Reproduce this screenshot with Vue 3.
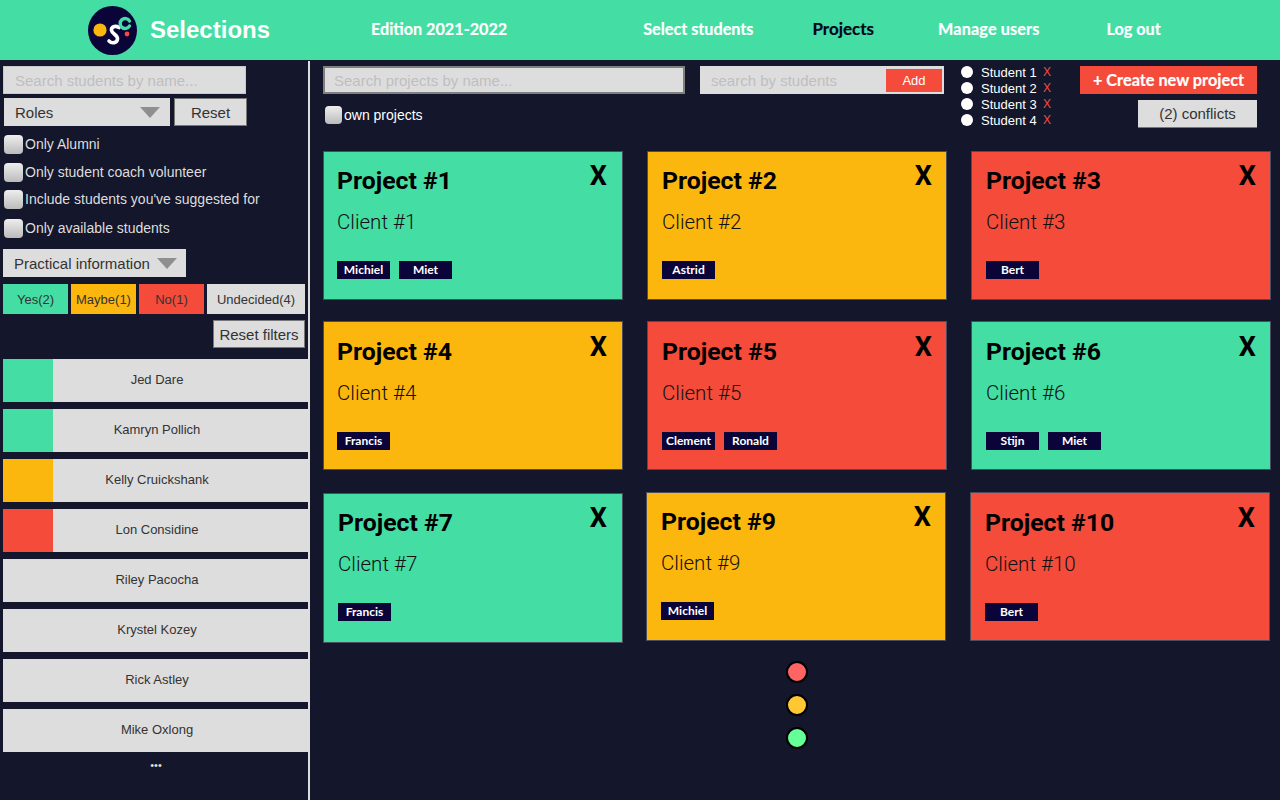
<template>
  <div class="page">
    <header class="topbar">
      <svg class="logo" viewBox="0 0 49 49" width="49" height="49">
        <circle cx="24.5" cy="24.5" r="24.5" fill="#0a0439" />
        <circle cx="12" cy="24" r="6.6" fill="#fcb70e" />
        <path d="M31 21.5C27 19 23 21 23.5 24.5 24 28 30 29 29.5 33 29 37 24 38 21 35" fill="none" stroke="#fff" stroke-width="3.6" stroke-linecap="round" />
        <path d="M41.5 15A5 5 0 1 0 41.5 20" fill="none" stroke="#44dda4" stroke-width="3.4" stroke-linecap="round" />
        <circle cx="39" cy="28" r="2.4" fill="#f44b3a" />
      </svg>
      <div class="brand">Selections</div>
      <a class="nav edition">Edition 2021-2022</a>
      <a class="nav select">Select students</a>
      <a class="nav current">Projects</a>
      <a class="nav manage">Manage users</a>
      <a class="nav logout">Log out</a>
    </header>

    <div class="body">
      <aside class="sidebar">
        <input class="field student-search" placeholder="Search students by name..." />
        <div class="role-row">
          <div class="dropdown roles">Roles<span class="caret"></span></div>
          <button class="plain reset">Reset</button>
        </div>
        <label v-for="c in checks" :key="c.text" class="check" :class="c.cls">
          <input type="checkbox" />{{ c.text }}
        </label>
        <div class="dropdown practical">Practical information<span class="caret"></span></div>
        <div class="filters">
          <button v-for="f in filters" :key="f.text" class="filter" :class="f.cls">{{ f.text }}</button>
        </div>
        <div class="reset-row"><button class="plain reset-filters">Reset filters</button></div>
        <div class="students">
          <div v-for="s in students" :key="s.name" class="student">
            <div class="swatch" :class="s.cls"></div>
            <div class="student-name">{{ s.name }}</div>
          </div>
        </div>
        <div class="more">•••</div>
      </aside>

      <main class="main">
        <div class="toolbar">
          <div class="project-search">
            <input class="field project-input" placeholder="Search projects by name..." />
            <label class="own"><input type="checkbox" />own projects</label>
          </div>
          <div class="by-student">
            <input class="by-input" placeholder="search by students" />
            <button class="add">Add</button>
          </div>
          <ul class="picked">
            <li v-for="n in 4" :key="n"><span class="radio"></span><span class="picked-name">Student {{ n }}</span><span class="remove">X</span></li>
          </ul>
          <div class="actions">
            <button class="create">+ Create new project</button>
            <button class="conflicts">(2) conflicts</button>
          </div>
        </div>

        <div class="grid">
          <div v-for="(row, r) in rows" :key="r" class="row" :class="'row' + r">
            <div v-for="p in row" :key="p.id" class="card" :class="p.cls">
              <div class="card-head">
                <h2>Project #{{ p.id }}</h2>
                <span class="close">X</span>
              </div>
              <div class="client">Client #{{ p.id }}</div>
              <div class="tags"><span v-for="t in p.tags" :key="t" class="tag">{{ t }}</span></div>
            </div>
          </div>
        </div>

        <div class="dots">
          <span class="dot red"></span>
          <span class="dot amber"></span>
          <span class="dot lime"></span>
        </div>
      </main>
    </div>
  </div>
</template>

<script setup>
const checks = [
  { text: 'Only Alumni', cls: 'c1' },
  { text: 'Only student coach volunteer', cls: 'c2' },
  { text: "Include students you've suggested for", cls: 'c3' },
  { text: 'Only available students', cls: 'c4' },
]
const filters = [
  { text: 'Yes(2)', cls: 'green' },
  { text: 'Maybe(1)', cls: 'yellow' },
  { text: 'No(1)', cls: 'coral' },
  { text: 'Undecided(4)', cls: 'undecided' },
]
const students = [
  { name: 'Jed Dare', cls: 'green' },
  { name: 'Kamryn Pollich', cls: 'green' },
  { name: 'Kelly Cruickshank', cls: 'yellow' },
  { name: 'Lon Considine', cls: 'coral' },
  { name: 'Riley Pacocha', cls: '' },
  { name: 'Krystel Kozey', cls: '' },
  { name: 'Rick Astley', cls: '' },
  { name: 'Mike Oxlong', cls: '' },
]
const rows = [
  [
    { id: 1, cls: 'green', tags: ['Michiel', 'Miet'] },
    { id: 2, cls: 'yellow', tags: ['Astrid'] },
    { id: 3, cls: 'coral', tags: ['Bert'] },
  ],
  [
    { id: 4, cls: 'yellow', tags: ['Francis'] },
    { id: 5, cls: 'coral', tags: ['Clement', 'Ronald'] },
    { id: 6, cls: 'green', tags: ['Stijn', 'Miet'] },
  ],
  [
    { id: 7, cls: 'green', tags: ['Francis'] },
    { id: 9, cls: 'yellow', tags: ['Michiel'] },
    { id: 10, cls: 'coral', tags: ['Bert'] },
  ],
]
</script>

<style>
html, body { margin: 0; background: #14162b; }
</style>

<style scoped>
.page { width: 1280px; height: 800px; overflow: hidden; background: #14162b; font-family: "Liberation Sans", Arial, sans-serif; }
.green { background: #44dda4; }
.yellow { background: #fcb70e; }
.coral { background: #f44b3a; }

.topbar { height: 60px; background: #44dda4; display: flex; align-items: center; padding-left: 88px; box-sizing: border-box; }
.logo { flex: none; }
.brand { margin-left: 13px; font-size: 24px; font-weight: 700; color: #fff; width: 221px; }
.nav { font-family: Lato, sans-serif; font-weight: 700; font-size: 16.2px; color: #fff; white-space: nowrap; padding-bottom: 3px; -webkit-text-stroke: 0.2px currentColor; }
.nav.current { color: #05051a; font-size: 17px; }
.select { margin-left: 136px; }
.current { margin-left: 59px; }
.manage { margin-left: 64px; letter-spacing: 0.15px; }
.logout { margin-left: 67px; }

.body { display: flex; height: 740px; }
.sidebar { width: 305px; height: 734px; margin-top: 1px; border-right: 2px solid #ddd; flex: none; padding: 5px 0 0 3px; }

.field { display: block; box-sizing: border-box; height: 28px; background: #ddd; border: 2px solid #808080; padding: 0 9px; font-size: 15px; font-family: inherit; outline: none; }
.field::placeholder, .by-input::placeholder { color: #bfbfbf; opacity: 1; }
.student-search { width: 243px; border: 1px solid #c8c8c8; padding: 0 11px; }
.role-row { display: flex; gap: 4px; margin-top: 4px; }
.dropdown { box-sizing: border-box; height: 28px; background: #ddd; color: #333; font-size: 15px; display: flex; align-items: center; justify-content: space-between; }
.roles { width: 166px; padding: 0 10px 0 11px; margin-left: 1px; }
.practical { width: 183px; margin-top: 7px; padding: 0 9px 0 11px; }
.caret { width: 0; height: 0; border-left: 10px solid transparent; border-right: 10px solid transparent; border-top: 11px solid #8f8f8f; }
.plain { box-sizing: border-box; height: 28px; background: #ddd; border: 1px solid #777; color: #333; font-family: inherit; font-size: 15px; padding: 0; }
.reset { width: 73px; }

.check { display: flex; align-items: center; height: 28px; color: #ddd; font-size: 14px; }
.check.c1 { margin-top: 4px; }
.check.c3 { margin-top: -1px; }
.check.c4 { margin-top: 1px; }
.check input, .own input { appearance: none; margin: 0 2px 0 1px; width: 19px; height: 19px; border-radius: 4px; background: linear-gradient(#eee, #bbb); flex: none; box-sizing: border-box; }

.filters { display: flex; gap: 3px; margin-top: 7px; }
.filter { box-sizing: border-box; height: 30px; width: 65px; border: 0; padding: 0; font-family: inherit; font-size: 13px; color: #333; }
.undecided { width: 98px; background: #ddd; }
.reset-row { width: 302px; display: flex; justify-content: flex-end; margin-top: 6px; }
.reset-filters { width: 92px; }

.students { display: flex; flex-direction: column; gap: 7px; margin-top: 11px; }
.student { display: flex; height: 43px; background: #ddd; }
.swatch { width: 50px; flex: none; }
.student-name { flex: 1; text-align: center; line-height: 41px; font-size: 13px; color: #333; padding-right: 47px; }
.more { color: #ddd; font-size: 11px; line-height: 14px; text-align: center; width: 306px; margin-top: 6px; }

.main { flex: 1; padding: 6px 0 0 13px; min-width: 0; }
.toolbar { display: flex; height: 85px; }
.project-input { width: 362px; }
.own { display: flex; align-items: center; margin-top: 12px; color: #fff; font-size: 14px; height: 18px; }
.own input { width: 17px; height: 18px; margin: 0 2px 0 2px; }
.by-student { margin-left: 15px; box-sizing: border-box; width: 244px; height: 28px; background: #ddd; display: flex; align-items: center; justify-content: space-between; padding-right: 2px; }
.by-input { border: 0; background: none; outline: none; width: 170px; padding: 0 0 0 11px; font-size: 15px; font-family: inherit; }
.add { width: 56px; height: 23px; background: #f44b3a; color: #fff; border: 0; padding: 0; font-size: 13px; font-family: inherit; }
.picked { list-style: none; margin: -2px 0 0 17px; padding: 0; width: 119px; }
.picked li { display: flex; align-items: center; height: 16px; color: #fff; font-size: 13px; }
.radio { width: 12px; height: 12px; border-radius: 50%; background: #fff; margin-right: 8px; }
.picked-name { width: 62px; }
.remove { color: #f44b3a; font-size: 12px; }
.actions { display: flex; flex-direction: column; align-items: flex-end; gap: 6px; width: 177px; }
.create { box-sizing: border-box; width: 177px; height: 28px; background: #f44b3a; color: #fff; border: 0; padding: 0 0 2px; font-family: Lato, sans-serif; font-weight: 700; font-size: 16.3px; -webkit-text-stroke: 0.2px currentColor; }
.conflicts { box-sizing: border-box; width: 119px; height: 28px; background: #ddd; border: 0; border-bottom: 1px solid #777; padding: 0; color: #333; font-size: 15px; font-family: inherit; }

.row { display: flex; gap: 24px; margin-bottom: 21px; }
.row1 { margin-bottom: 23px; }
.row.row2 { margin-bottom: 0; }
.row2 .card:first-child { height: 150px; }
.row2 .card:nth-child(2) { margin-left: -1px; margin-top: -1px; }
.row2 .card:nth-child(3) { margin-top: -1px; }
.card { box-sizing: border-box; width: 300px; height: 149px; border: 1px solid #4a4c60; padding: 0 14px; }
.row0 .card:first-child, .row1 .card:first-child { padding-left: 13px; }
.row1 .card-head { padding-top: 16px; }
.row2 .card:nth-child(3) .card-head { padding-top: 16px; }
.card-head { display: flex; justify-content: space-between; padding-top: 15px; }
h2 { margin: 0; font-family: Roboto, sans-serif; font-size: 24.8px; line-height: 28px; font-weight: 700; color: #000; }
.close { font-family: Roboto, sans-serif; font-weight: 700; font-size: 27px; line-height: 20px; color: #000; margin-top: -1px; }
.card:first-child .close { margin-right: 1px; }
.client { margin-top: 15px; font-family: Roboto, sans-serif; font-weight: 300; font-size: 20.5px; line-height: 24px; color: #111; }
.tags { display: flex; gap: 9px; margin-top: 27px; }
.tag { width: 53px; height: 18px; background: #0a0439; color: #fff; font-family: Lato, sans-serif; font-weight: 700; font-size: 12px; line-height: 18px; text-align: center; }

.dots { display: flex; flex-direction: column; align-items: center; gap: 11px; width: 948px; margin-top: 18px; }
.dot { box-sizing: border-box; width: 22px; height: 22px; border-radius: 50%; border: 2px solid #000; }
.dot.red { background: #ff6464; }
.dot.amber { background: #ffc832; }
.dot.lime { background: #64ff96; }
</style>
